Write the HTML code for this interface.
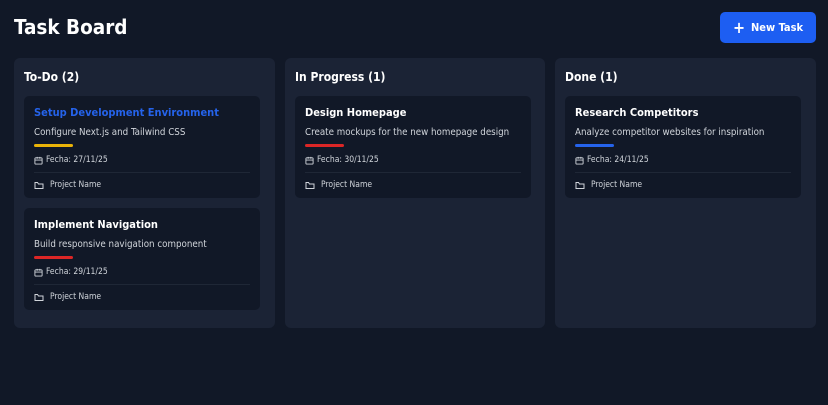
<!DOCTYPE html>
<html><head><meta charset="utf-8"><style>
*{box-sizing:border-box;margin:0;padding:0}
body{width:828px;height:405px;background:#111827;font-family:"DejaVu Sans Condensed","DejaVu Sans","Liberation Sans",sans-serif;color:#fff;position:relative;overflow:hidden}
h1{position:absolute;left:14px;top:14px;font-size:20.5px;font-weight:bold;line-height:26px;white-space:nowrap}
.btn{position:absolute;left:720px;top:12px;width:96px;height:31px;background:#1d5ef2;border-radius:5px;font-size:11px;font-weight:bold;display:flex;align-items:center;justify-content:center;gap:6px;white-space:nowrap}
.col{position:absolute;top:58px;width:261px;height:270px;background:#1b2335;border-radius:6px}
.col h2{position:absolute;left:10px;top:10px;font-size:12px;font-weight:bold;line-height:18px;white-space:nowrap}
.card{position:absolute;left:10px;background:#111827;border-radius:5px;width:236px;height:102px}
.card>*{position:absolute;left:10px;white-space:nowrap}
.t{top:9px;font-size:11px;font-weight:bold;line-height:16px}
.d{top:30px;font-size:9.7px;color:#d1d5db;line-height:14px}
.bar{top:48px;width:39px;height:3px;border-radius:2px}
.f{top:58px;font-size:8.5px;color:#d1d5db;display:flex;align-items:center;gap:3px;line-height:12px}
.hr{top:76px;width:216px;height:1px;background:#1f2736}
.p{top:83px;font-size:8.5px;color:#d1d5db;display:flex;align-items:center;gap:6px;line-height:12px}
svg{display:block}
</style></head><body>
<h1>Task Board</h1>
<div class="btn"><span style="font-size:16px;font-weight:bold;line-height:12px">+</span>New Task</div>

<div class="col" style="left:14px">
<h2>To-Do (2)</h2>
<div class="card" style="top:38px"><div class="t" style="color:#2563eb">Setup Development Environment</div><div class="d">Configure Next.js and Tailwind CSS</div><div class="bar" style="background:#eab308"></div>
<div class="f"><svg width="9" height="9" viewBox="0 0 10 10" fill="none" stroke="#d1d5db" stroke-width="1"><rect x="1" y="2" width="8" height="7" rx="1"/><path d="M1 4.5h8M3.5 1v2M6.5 1v2"/></svg>Fecha: 27/11/25</div><div class="hr"></div>
<div class="p"><svg width="10" height="9" viewBox="0 0 10 9" fill="none" stroke="#d1d5db" stroke-width="1"><path d="M1 2V7.5H9V3H4.5L3.5 1.5H1Z"/></svg>Project Name</div></div>
<div class="card" style="top:150px"><div class="t">Implement Navigation</div><div class="d">Build responsive navigation component</div><div class="bar" style="background:#dc2626"></div>
<div class="f"><svg width="9" height="9" viewBox="0 0 10 10" fill="none" stroke="#d1d5db" stroke-width="1"><rect x="1" y="2" width="8" height="7" rx="1"/><path d="M1 4.5h8M3.5 1v2M6.5 1v2"/></svg>Fecha: 29/11/25</div><div class="hr"></div>
<div class="p"><svg width="10" height="9" viewBox="0 0 10 9" fill="none" stroke="#d1d5db" stroke-width="1"><path d="M1 2V7.5H9V3H4.5L3.5 1.5H1Z"/></svg>Project Name</div></div>
</div>

<div class="col" style="left:285px;width:260px">
<h2>In Progress (1)</h2>
<div class="card" style="top:38px"><div class="t">Design Homepage</div><div class="d">Create mockups for the new homepage design</div><div class="bar" style="background:#dc2626"></div>
<div class="f"><svg width="9" height="9" viewBox="0 0 10 10" fill="none" stroke="#d1d5db" stroke-width="1"><rect x="1" y="2" width="8" height="7" rx="1"/><path d="M1 4.5h8M3.5 1v2M6.5 1v2"/></svg>Fecha: 30/11/25</div><div class="hr"></div>
<div class="p"><svg width="10" height="9" viewBox="0 0 10 9" fill="none" stroke="#d1d5db" stroke-width="1"><path d="M1 2V7.5H9V3H4.5L3.5 1.5H1Z"/></svg>Project Name</div></div>
</div>

<div class="col" style="left:555px">
<h2>Done (1)</h2>
<div class="card" style="top:38px"><div class="t">Research Competitors</div><div class="d">Analyze competitor websites for inspiration</div><div class="bar" style="background:#2563eb"></div>
<div class="f"><svg width="9" height="9" viewBox="0 0 10 10" fill="none" stroke="#d1d5db" stroke-width="1"><rect x="1" y="2" width="8" height="7" rx="1"/><path d="M1 4.5h8M3.5 1v2M6.5 1v2"/></svg>Fecha: 24/11/25</div><div class="hr"></div>
<div class="p"><svg width="10" height="9" viewBox="0 0 10 9" fill="none" stroke="#d1d5db" stroke-width="1"><path d="M1 2V7.5H9V3H4.5L3.5 1.5H1Z"/></svg>Project Name</div></div>
</div>
</body></html>
